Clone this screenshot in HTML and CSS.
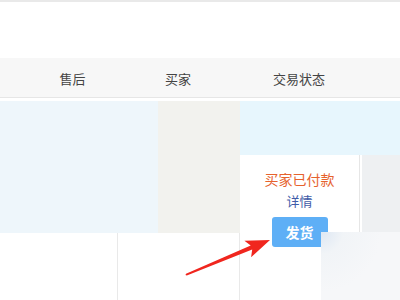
FILE: index.html
```html
<!DOCTYPE html>
<html lang="zh">
<head>
<meta charset="utf-8">
<link rel="stylesheet" href="styles.css">
</head>
<body>
<div class="topbar"></div>
<div class="blank"></div>
<div class="thead">
  <div class="th">售后</div>
  <div class="th">买家</div>
  <div class="th">交易状态</div>
</div>
<div class="spacer"></div>
<div class="rows">
  <div class="left">
    <div class="left-top">
      <div class="cell-blue"></div>
      <div class="cell-beige"></div>
    </div>
    <div class="left-bottom">
      <div class="lb-cell lb-a"></div>
      <div class="lb-cell lb-b"></div>
    </div>
  </div>
  <div class="right">
    <div class="strip"></div>
    <div class="cells">
      <div class="order">
        <div class="status">买家已付款</div>
        <a class="detail">详情</a>
        <button class="ship">发货</button>
      </div>
      <div class="gray"></div>
    </div>
  </div>
</div>
<div class="overlay"></div>
<svg class="arrow" width="400" height="300" viewBox="0 0 400 300">
  <polygon points="186,273.8 250.7,245.6 244.4,240.7 270,240 251.1,257.3 252.2,249.4 186.8,275.6 185.5,275" fill="#f0261e"/>
</svg>
</body>
</html>
```

FILE: styles.css
```css
html, body {
  margin: 0;
  padding: 0;
  background: #fff;
  width: 400px;
  height: 300px;
  overflow: hidden;
  font-family: "Noto Sans CJK SC", "Noto Sans", sans-serif;
}
.topbar {
  height: 2px;
  background: #e9e9e9;
}
.blank {
  height: 56px;
}
.thead {
  height: 40px;
  background: #f7f7f7;
  border-bottom: 1px solid #e6e6e6;
  display: grid;
  grid-template-columns: 145px 66px 176px;
  align-items: center;
  font-size: 13px;
  color: #444;
  line-height: 20px;
  padding-top: 2px;
  box-sizing: border-box;
}
.th {
  text-align: center;
}
.spacer {
  height: 3px;
}
.rows {
  display: flex;
  height: 199px;
}
.left {
  width: 240px;
  display: flex;
  flex-direction: column;
}
.left-top {
  display: flex;
  height: 132px;
}
.cell-blue {
  width: 158px;
  background: #eef6fb;
}
.cell-beige {
  width: 82px;
  background: #f2f2ee;
}
.left-bottom {
  flex: 1;
  display: flex;
}
.lb-cell {
  border-right: 1px solid #e9e9e9;
}
.lb-a {
  width: 117px;
}
.lb-b {
  width: 121px;
}
.right {
  flex: 1;
  display: flex;
  flex-direction: column;
}
.strip {
  height: 54px;
  background: #e7f6fd;
}
.cells {
  flex: 1;
  display: flex;
  align-items: flex-start;
}
.order {
  width: 120px;
  height: 145px;
  border-right: 1px solid #e6e6e6;
  display: flex;
  flex-direction: column;
  align-items: center;
  padding-top: 13px;
  box-sizing: border-box;
}
.status {
  font-size: 14px;
  line-height: 22px;
  color: #e6622d;
}
.detail {
  font-size: 13px;
  line-height: 22px;
  color: #3f5ca8;
}
.ship {
  margin-top: 5px;
  width: 56px;
  height: 30px;
  border: none;
  border-radius: 3px;
  background: #5eaff6;
  color: #fff;
  font-family: inherit;
  font-size: 14px;
  font-weight: bold;
  padding: 0;
}
.gray {
  margin-left: 2px;
  flex: 1;
  height: 77px;
  background: #eef0f2;
}
.overlay {
  position: absolute;
  left: 321px;
  top: 232px;
  width: 79px;
  height: 68px;
  background: radial-gradient(circle at 0 0, #dde7f3 0, #f1f4f7 22px, #f6f7f9 60px);
}
.arrow {
  position: absolute;
  left: 0;
  top: 0;
}
```
